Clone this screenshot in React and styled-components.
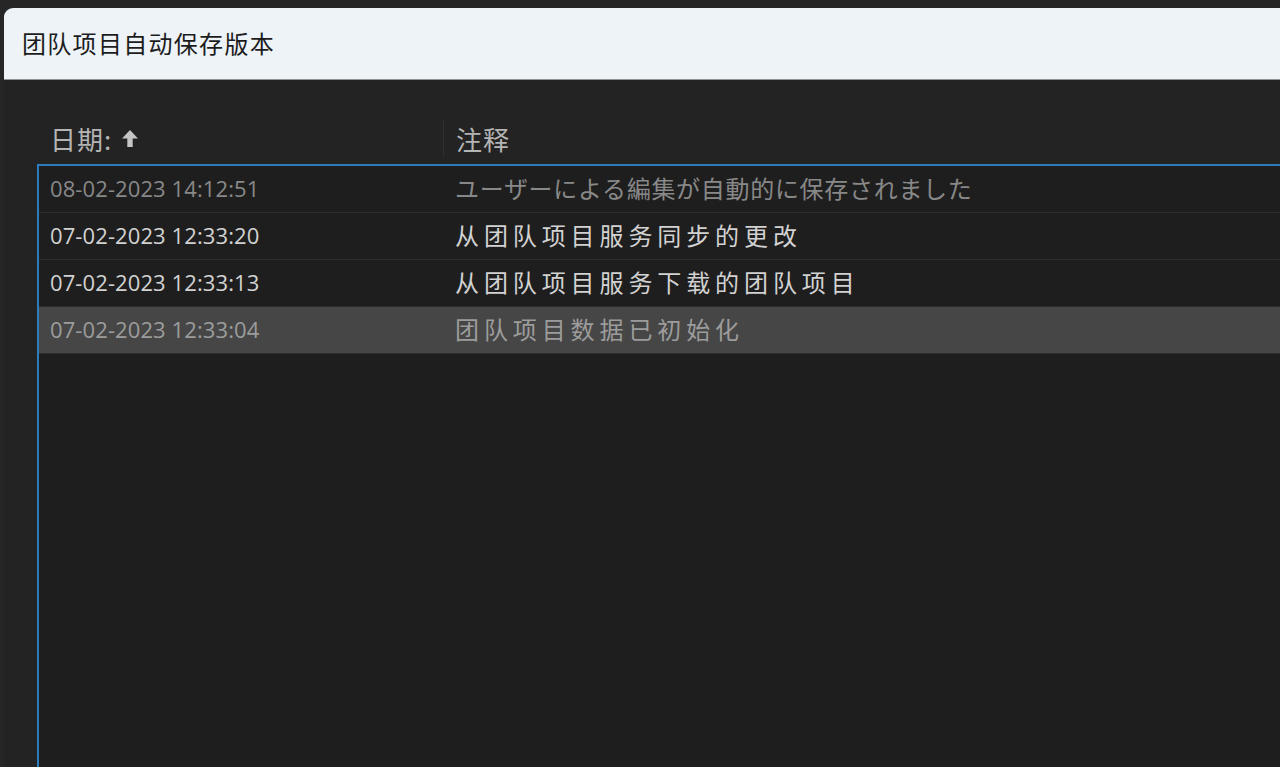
import React from 'react';
import styled, { createGlobalStyle } from 'styled-components';

const Global = createGlobalStyle`
  html, body {
    margin: 0;
    padding: 0;
    background: #262626;
  }
`;

const Page = styled.div`
  width: 1280px;
  height: 767px;
  overflow: hidden;
  background: #262626;
  padding: 8px 0 0 4px;
  box-sizing: border-box;
  font-family: "Noto Sans CJK SC", "Noto Sans", sans-serif;
`;

const Window = styled.div`
  width: 1320px;
  height: 800px;
  display: flex;
  flex-direction: column;
  background: #232323;
  border-radius: 9px 9px 0 0;
  overflow: hidden;
`;

const TitleBar = styled.div`
  height: 72px;
  flex: none;
  display: flex;
  align-items: center;
  padding-left: 18px;
  padding-bottom: 2px;
  box-sizing: border-box;
  background: #eef3f8;
  border-bottom: 1px solid #8e9092;
  color: #1c1c1c;
  font-size: 24px;
  letter-spacing: 1.3px;
`;

const Body = styled.div`
  flex: 1;
  display: flex;
  flex-direction: column;
  padding-left: 33px;
`;

const HeaderRow = styled.div`
  height: 84px;
  flex: none;
  display: grid;
  grid-template-columns: 406px 1fr;
  align-items: end;
  padding-bottom: 8px;
  box-sizing: border-box;
`;

const HeadCell = styled.div`
  display: flex;
  align-items: center;
  gap: 9px;
  height: 36px;
  padding-left: ${p => (p.$first ? '13px' : '12px')};
  border-left: ${p => (p.$first ? 'none' : '1px solid #303030')};
  color: #b4b4b4;
  font-size: 26px;
  letter-spacing: 1px;
`;

const Table = styled.div`
  flex: 1;
  background: #1e1e1e;
  border-top: 2px solid #2b7bbf;
  border-left: 2px solid #2b7bbf;
`;

const Row = styled.div`
  height: 46px;
  display: grid;
  grid-template-columns: 404px 1fr;
  align-items: center;
  border-bottom: 1px solid #2c2c2c;
  background: ${p => (p.$selected ? '#464646' : '#1e1e1e')};
  color: ${p => p.$tone};
`;

const DateCell = styled.div`
  padding-left: 11px;
  padding-bottom: 2px;
  font-family: "Open Sans", "Liberation Sans", sans-serif;
  font-size: 22px;
  letter-spacing: 0.1px;
`;

const NoteCell = styled.div`
  padding-left: 12px;
  padding-bottom: 3px;
  font-size: 24px;
  letter-spacing: ${p => p.$spacing};
  white-space: nowrap;
`;

const SortArrow = () => (
  <svg width="18" height="19" viewBox="0 0 18 19">
    <path d="M9 1 L17 9.5 H11.7 V18 H6.3 V9.5 H1 Z" fill="#c4c4c4" />
  </svg>
);

const rows = [
  { date: '08-02-2023 14:12:51', note: 'ユーザーによる編集が自動的に保存されました', tone: '#888888', spacing: '0.7px' },
  { date: '07-02-2023 12:33:20', note: '从团队项目服务同步的更改', tone: '#d2d2d2', spacing: '4.9px' },
  { date: '07-02-2023 12:33:13', note: '从团队项目服务下载的团队项目', tone: '#d2d2d2', spacing: '4.9px' },
  { date: '07-02-2023 12:33:04', note: '团队项目数据已初始化', tone: '#9c9c9c', spacing: '4.9px', selected: true },
];

export default function App() {
  return (
    <Page>
      <Global />
      <Window>
        <TitleBar>团队项目自动保存版本</TitleBar>
        <Body>
          <HeaderRow>
            <HeadCell $first>
              <span>日期:</span>
              <SortArrow />
            </HeadCell>
            <HeadCell>注释</HeadCell>
          </HeaderRow>
          <Table>
            {rows.map(r => (
              <Row key={r.date} $tone={r.tone} $selected={r.selected}>
                <DateCell>{r.date}</DateCell>
                <NoteCell $spacing={r.spacing}>{r.note}</NoteCell>
              </Row>
            ))}
          </Table>
        </Body>
      </Window>
    </Page>
  );
}
